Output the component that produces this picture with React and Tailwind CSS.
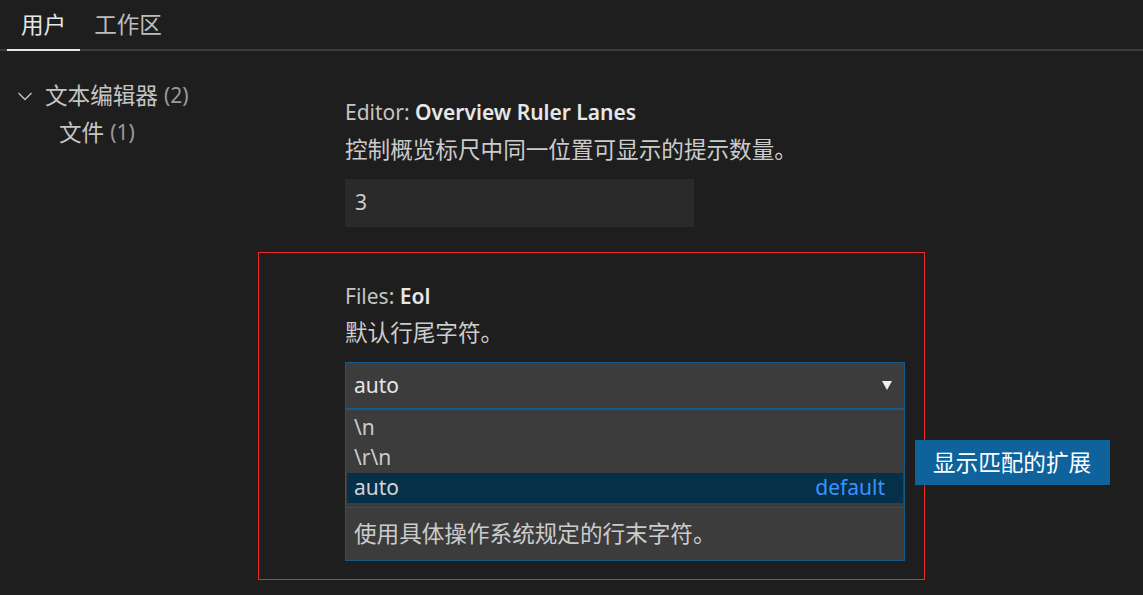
import React from 'react';

const font = 'font-["Noto_Sans","Noto_Sans_CJK_SC",sans-serif]';

function Tabs() {
    return (
        <div className="flex h-[51px] border-b-2 border-[#3c3c3c] pl-[7px]">
            <div className="flex items-center px-[14px] border-b-2 border-[#e7e7e7] -mb-[2px] text-[22.6px] text-[#e7e7e7]">
                用户
            </div>
            <div className="flex items-center px-[14px] text-[22.6px] text-[#bdbdbd]">
                工作区
            </div>
        </div>
    );
}

function Tree() {
    return (
        <div className="w-[258px] shrink-0 pt-[26px] text-[22.6px]">
            <div className="flex items-center h-[37px] pl-[17px]">
                <svg width="16" height="16" viewBox="0 0 16 16" className="mr-[12px]">
                    <path d="M1.5 5 L8 11.5 L14.5 5" fill="none" stroke="#c5c5c5" strokeWidth="1.3" />
                </svg>
                <span className="text-[#c5c5c5]">文本编辑器</span>
                <span className="ml-[6px] text-[21px] text-[#9a9a9a]">(2)</span>
            </div>
            <div className="flex items-center h-[37px] pl-[59px]">
                <span className="text-[#c5c5c5]">文件</span>
                <span className="ml-[6px] text-[21px] text-[#9a9a9a]">(1)</span>
            </div>
        </div>
    );
}

function Options() {
    const items = [
        { label: '\\n' },
        { label: '\\r\\n' },
        { label: 'auto', note: 'default', active: true },
    ];
    return (
        <div className="border border-t-0 border-[#175a8a] bg-[#3c3c3c]">
            <div className="border-t-2 border-[#175a8a]" />
            <div className="pt-[3px] px-[1px]">
                {items.map((it) => (
                    <div
                        key={it.label}
                        className={
                            'flex items-center justify-between h-[30px] pl-[7px] pr-[18px] text-[21px] ' +
                            (it.active ? 'bg-[#062f4a] text-[#d4d4d4]' : 'text-[#cccccc]')
                        }
                    >
                        <span>{it.label}</span>
                        {it.note && <span className="text-[#3794ff]">{it.note}</span>}
                    </div>
                ))}
            </div>
            <div className="mt-[4px] border-t border-[#484848] h-[53px] flex items-center pl-[8px] text-[22.6px] text-[#cccccc]">
                使用具体操作系统规定的行末字符。
            </div>
        </div>
    );
}

export default function App() {
    return (
        <div className={'relative w-[1143px] h-[595px] overflow-hidden bg-[#1e1e1e] ' + font}>
            <Tabs />
            <div className="flex">
                <Tree />
                <div className="flex-1">
                    <div className="pl-[87px] pt-[44px]">
                        <div className="h-[36px] flex items-center text-[21px]">
                            <span className="text-[#c5c5c5]">Editor:&nbsp;</span>
                            <span className="font-semibold text-[#e7e7e7]">Overview Ruler Lanes</span>
                        </div>
                        <div className="h-[37px] flex items-center text-[22.6px] text-[#cccccc]">
                            控制概览标尺中同一位置可显示的提示数量。
                        </div>
                        <div className="mt-[11px] w-[349px] h-[48px] bg-[#2a2a2a] flex items-center pl-[10px] text-[21px] text-[#cccccc]">
                            3
                        </div>
                    </div>
                    <div className="mt-[25px] w-[667px] h-[328px] border border-[#f0282b] pl-[86px] pt-[26px]">
                        <div className="h-[36px] flex items-center text-[21px]">
                            <span className="text-[#c5c5c5]">Files:&nbsp;</span>
                            <span className="font-semibold text-[#e7e7e7]">Eol</span>
                        </div>
                        <div className="h-[36px] flex items-center text-[22.6px] text-[#cccccc]">
                            默认行尾字符。
                        </div>
                        <div className="mt-[11px] w-[560px]">
                            <div className="h-[46px] border border-b-0 border-[#175a8a] bg-[#3c3c3c] flex items-center justify-between pl-[8px] pr-[12px] text-[21px] text-[#e7e7e7]">
                                <span>auto</span>
                                <svg width="10" height="10" viewBox="0 0 10 10">
                                    <path d="M0 0 H10 L5 9 Z" fill="#f0f0f0" />
                                </svg>
                            </div>
                            <Options />
                        </div>
                    </div>
                </div>
            </div>
            <div className="absolute left-[915px] top-[440px] w-[195px] h-[45px] bg-[#0e639c] flex items-center pl-[18px] text-[22.6px] text-white">
                显示匹配的扩展
            </div>
        </div>
    );
}
